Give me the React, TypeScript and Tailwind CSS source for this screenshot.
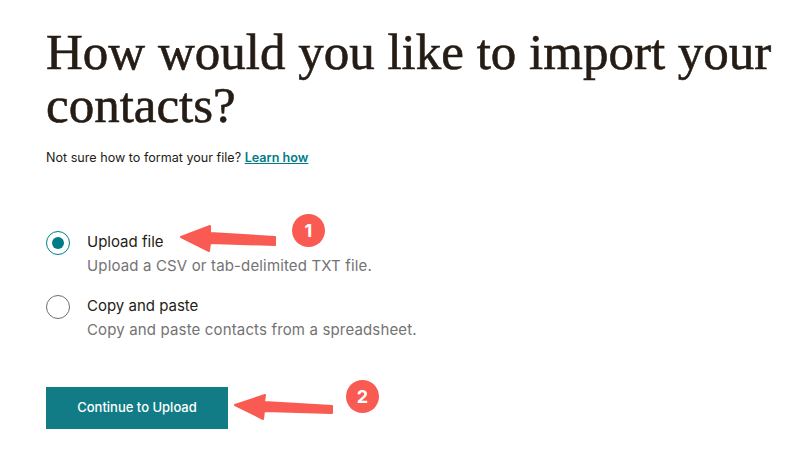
import React from "react";

const sans = "font-['Inter','Liberation_Sans',sans-serif]";

function Radio({ checked }: { checked?: boolean }) {
  return checked ? (
    <span className="flex h-6 w-6 shrink-0 items-center justify-center rounded-full border-[1.5px] border-[#007c89]">
      <span className="block h-3 w-3 rounded-full bg-[#007c89]" />
    </span>
  ) : (
    <span className="block h-6 w-6 shrink-0 rounded-full border-[1.5px] border-[#6e6e6e]" />
  );
}

function Option({ checked, title, desc }: { checked?: boolean; title: string; desc: string }) {
  return (
    <div className="flex items-start gap-[17px]">
      <Radio checked={checked} />
      <div className="flex flex-col">
        <span className="text-[15px] leading-[22px] text-[#241c15]">{title}</span>
        <span className="text-[15px] leading-[25px] tracking-[0.15px] text-[#737373]">{desc}</span>
      </div>
    </div>
  );
}

function Badge({ n, className }: { n: number; className: string }) {
  return (
    <div
      className={`absolute flex h-[33px] w-[33px] items-center justify-center rounded-full bg-[#f95b52] text-[18px] font-bold text-white ${className}`}
    >
      {n}
    </div>
  );
}

export default function App() {
  return (
    <div className={`relative h-[454px] w-[800px] overflow-hidden bg-white ${sans}`}>
      <div className="pl-[46px] pt-[26px]">
        <h1 className="font-['Liberation_Serif',serif] text-[51px] leading-[53px] font-normal text-[#241c15] [-webkit-text-stroke:0.6px_#241c15]">
          How would you like to import your
          <br />
          contacts?
        </h1>

        <p className="mt-[18px] text-[12.6px] leading-4 text-[#241c15]">
          Not sure how to format your file?{" "}
          <a className="font-semibold text-[#007c89] underline">Learn how</a>
        </p>

        <div className="mt-[65px] flex flex-col gap-[17px]">
          <Option checked title="Upload file" desc="Upload a CSV or tab-delimited TXT file." />
          <Option title="Copy and paste" desc="Copy and paste contacts from a spreadsheet." />
        </div>

        <button className="mt-[45px] h-[42px] w-[182px] bg-[#117c86] text-[13px] font-medium text-white">
          Continue to Upload
        </button>
      </div>

      <svg className="pointer-events-none absolute left-0 top-0" width="800" height="454">
        <polygon
          points="181,237 210,226 210,233 275,237 275,245 210,243 209,251"
          fill="#f95b52"
          stroke="#f95b52"
          strokeWidth="2"
          strokeLinejoin="round"
        />
        <polygon
          points="235,405 265,395 264,402 332,406 332,413 264,411 263,419"
          fill="#f95b52"
          stroke="#f95b52"
          strokeWidth="2"
          strokeLinejoin="round"
        />
      </svg>
      <Badge n={1} className="left-[292px] top-[214px]" />
      <Badge n={2} className="left-[346px] top-[380px]" />
    </div>
  );
}
